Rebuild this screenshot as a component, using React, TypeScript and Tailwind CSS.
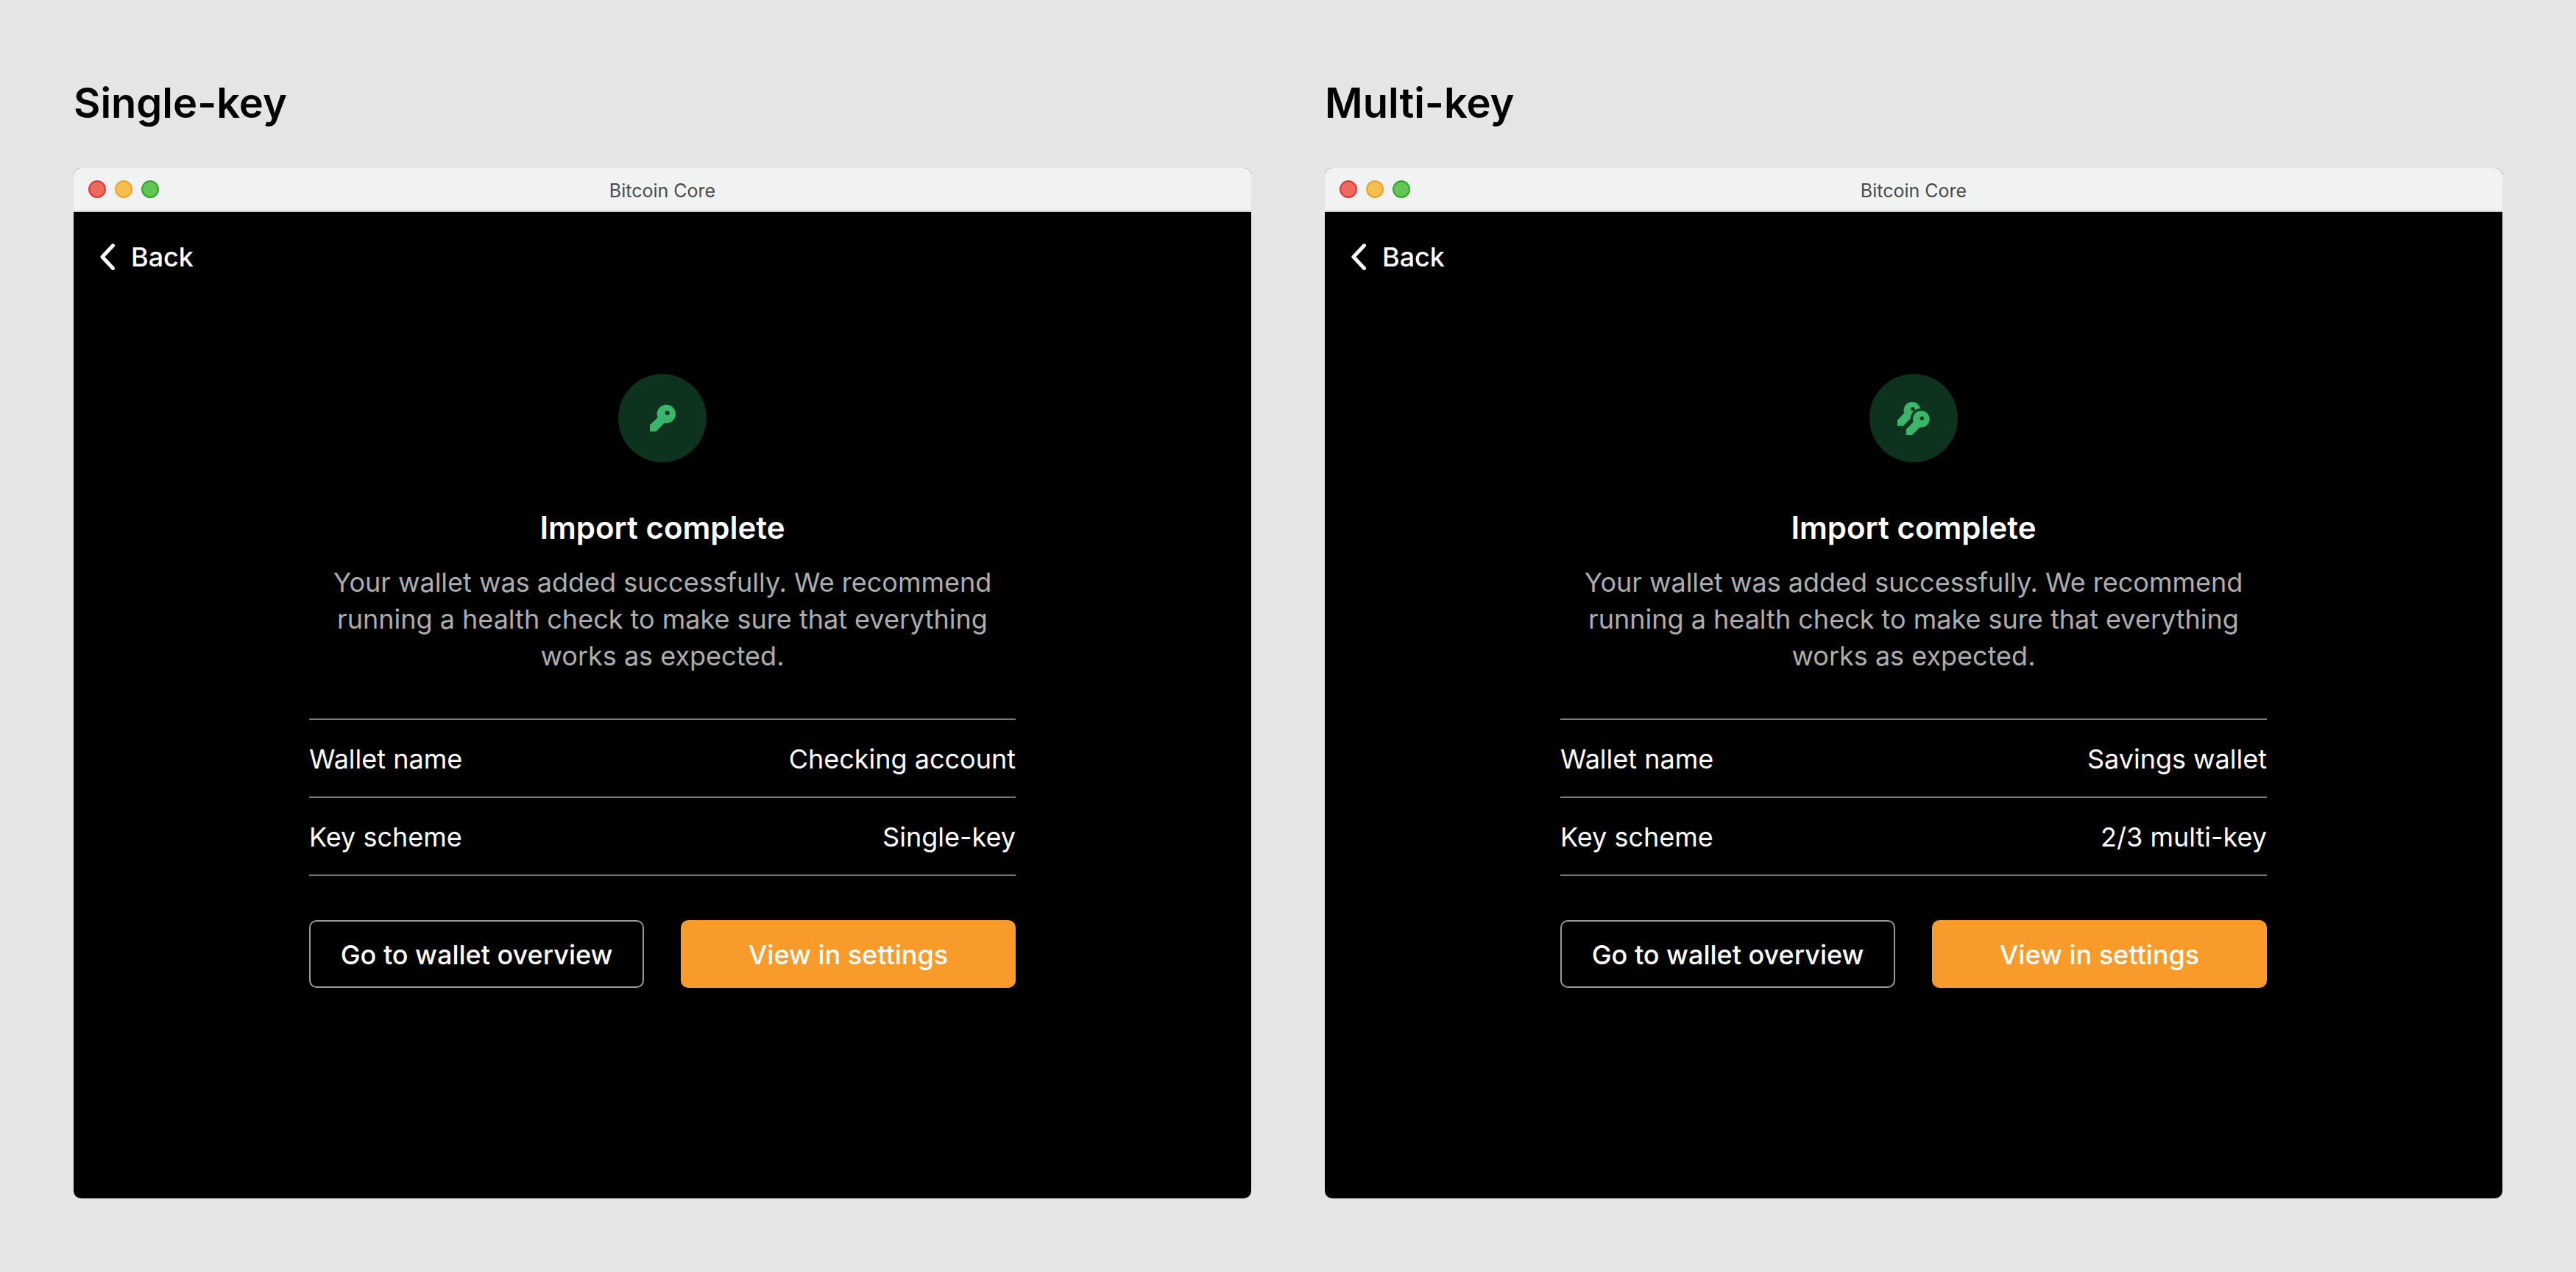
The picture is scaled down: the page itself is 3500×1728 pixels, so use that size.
import type { ReactNode } from "react";

function KeyIcon() {
  return (
    <svg viewBox="0 0 360 360" className="size-full" aria-hidden="true">
      <g className="fill-[#3ab66b]">
        <circle cx="196" cy="163" r="38" />
        <path d="M129 208 L162 176 L190 198 L154 235 H129 Z" />
      </g>
      <circle cx="200" cy="159" r="9" className="fill-[#0d331e]" />
    </svg>
  );
}

function KeysIcon() {
  return (
    <svg viewBox="0 0 360 360" className="size-full" aria-hidden="true">
      <g className="fill-[#3ab66b]">
        <circle cx="174" cy="148" r="34" />
        <path d="M114 188 L143 158 L170 179 L137 212 H114 Z" />
      </g>
      <circle cx="177" cy="143" r="8" className="fill-[#0d331e]" />
      <circle cx="211" cy="184" r="44" className="fill-[#0d331e]" />
      <g className="fill-[#3ab66b]">
        <circle cx="211" cy="184" r="34" />
        <path d="M150 225 L180 195 L207 216 L174 249 H150 Z" />
      </g>
      <circle cx="214" cy="181" r="8" className="fill-[#0d331e]" />
    </svg>
  );
}

function TitleBar() {
  return (
    <header className="grid h-15 grid-cols-[1fr_auto_1fr] items-center border-b-2 border-[#cdd0cf] bg-[#f1f3f2] px-5">
      <div className="flex gap-3">
        <button type="button" aria-label="Close" className="size-6 rounded-full border-2 border-[#e33432] bg-[#ed6a5e]" />
        <button type="button" aria-label="Minimize" className="size-6 rounded-full border-2 border-[#f19f27] bg-[#f5bf4f]" />
        <button type="button" aria-label="Zoom" className="size-6 rounded-full border-2 border-[#2ea62d] bg-[#62c554]" />
      </div>
      <span className="pt-1 text-[25px] leading-8 text-[#4a4a4a]">Bitcoin Core</span>
    </header>
  );
}

type Scenario = {
  title: string;
  icon: ReactNode;
  rows: [string, string][];
};

const scenarios: Scenario[] = [
  {
    title: "Single-key",
    icon: <KeyIcon />,
    rows: [
      ["Wallet name", "Checking account"],
      ["Key scheme", "Single-key"],
    ],
  },
  {
    title: "Multi-key",
    icon: <KeysIcon />,
    rows: [
      ["Wallet name", "Savings wallet"],
      ["Key scheme", "2/3 multi-key"],
    ],
  },
];

function WalletWindow({ icon, rows }: Omit<Scenario, "title">) {
  return (
    <div className="overflow-hidden rounded-[10px] bg-black text-white">
      <TitleBar />
      <div className="px-9 pt-9 pb-[286px] text-4xl leading-[50px]">
        <button type="button" className="flex items-center gap-[22px] font-medium">
          <svg viewBox="0 0 20 36" className="h-9 w-5" fill="none" stroke="currentColor" strokeWidth="5" strokeLinecap="round" strokeLinejoin="round" aria-hidden="true">
            <path d="M17.5 2.5 L3 18 L17.5 33.5" />
          </svg>
          Back
        </button>
        <div className="mx-auto mt-[134px] flex max-w-[960px] flex-col items-center">
          <div className="size-30 rounded-full bg-[#0d331e]">{icon}</div>
          <h2 className="mt-16 text-[42px] leading-[50px] font-semibold">Import complete</h2>
          <p className="mt-6 px-5 text-center text-[#adadad]">
            Your wallet was added successfully. We recommend running a health check to make sure that everything works as expected.
          </p>
          <table className="mt-[60px] w-full border-t-2 border-[#777777]">
            <tbody>
              {rows.map(([label, value]) => (
                <tr key={label} className="border-b-2 border-[#777777]">
                  <th scope="row" className="pt-7 pb-[26px] text-left font-normal">{label}</th>
                  <td className="pt-7 pb-[26px] text-right">{value}</td>
                </tr>
              ))}
            </tbody>
          </table>
          <div className="mt-[60px] grid w-full grid-cols-2 gap-[50px] font-medium">
            <button type="button" className="rounded-[10px] border-2 border-[#999999] pt-5 pb-[18px]">Go to wallet overview</button>
            <button type="button" className="rounded-[10px] border-2 border-[#f99b2a] bg-[#f99b2a] pt-5 pb-[18px]">View in settings</button>
          </div>
        </div>
      </div>
    </div>
  );
}

export default function App() {
  return (
    <main className="grid min-h-screen grid-cols-2 content-start gap-[100px] bg-[#e5e5e5] p-[100px] font-['Inter',sans-serif] [font-optical-sizing:none]">
      {scenarios.map(({ title, icon, rows }) => (
        <section key={title}>
          <h1 className="mb-12 text-[56px] leading-20 font-semibold text-black">{title}</h1>
          <WalletWindow icon={icon} rows={rows} />
        </section>
      ))}
    </main>
  );
}
